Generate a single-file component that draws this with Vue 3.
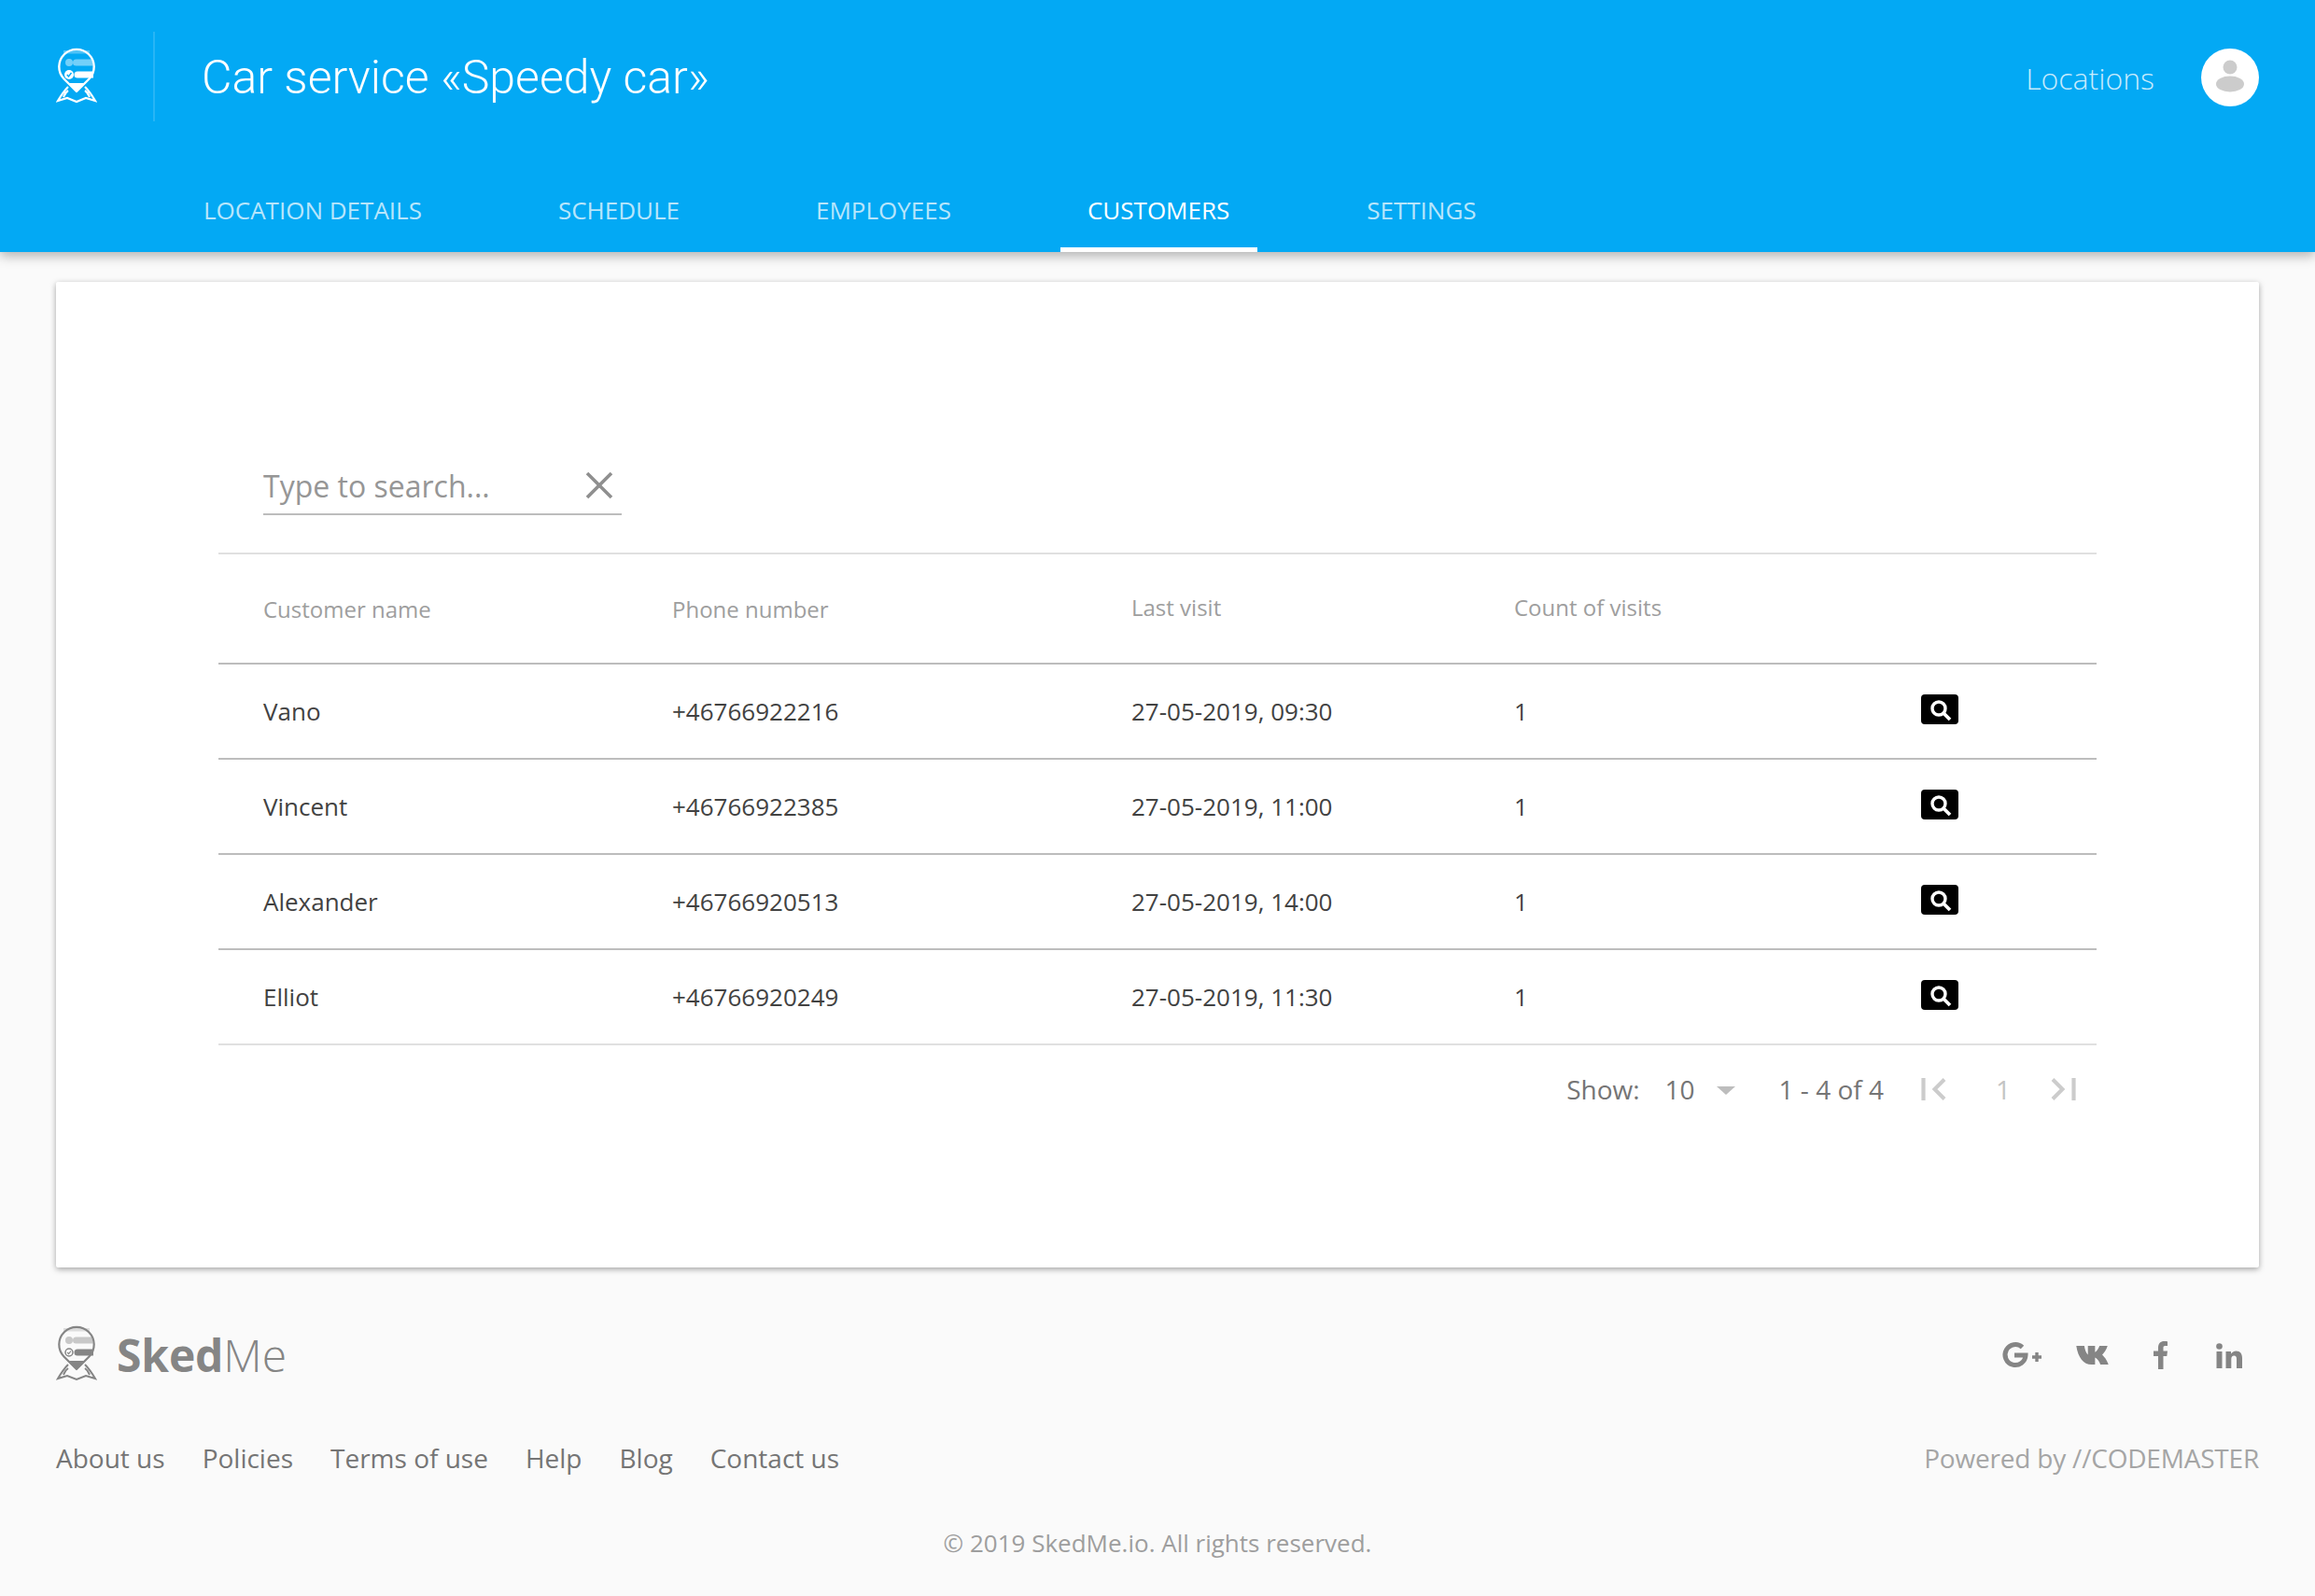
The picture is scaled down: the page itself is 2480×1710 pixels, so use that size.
<script setup>
const tabs = ['LOCATION DETAILS', 'SCHEDULE', 'EMPLOYEES', 'CUSTOMERS', 'SETTINGS']
const rows = [
  ['Vano', '+46766922216', '27-05-2019, 09:30', '1'],
  ['Vincent', '+46766922385', '27-05-2019, 11:00', '1'],
  ['Alexander', '+46766920513', '27-05-2019, 14:00', '1'],
  ['Elliot', '+46766920249', '27-05-2019, 11:30', '1'],
]
const links = ['About us', 'Policies', 'Terms of use', 'Help', 'Blog', 'Contact us']
</script>

<template>
  <div class="page">
    <header class="header">
      <div class="top">
        <div class="logo-box">
          <svg class="logo" viewBox="0 0 44 60" width="44" height="60">
            <rect x="8" y="3" width="28" height="3.500" fill="#fff" opacity=".3" />
            <circle cx="14" cy="16" r="4" fill="#fff" opacity=".45" />
            <path d="M21.500 12.500 H38 A19 19 0 0 1 39.500 19.500 H21.500 A3.500 3.500 0 0 1 21.500 12.500 Z" fill="#fff" opacity=".45" />
            <circle cx="14" cy="29" r="5" fill="#fff" />
            <path d="M11.800 29 L13.500 31 L16.500 27" fill="none" stroke="#03a9f4" stroke-width="1.400" />
            <path d="M23 25.500 H40 V32.500 H23 A3.500 3.500 0 0 1 23 25.500 Z" fill="#fff" />
            <path d="M22 47 L8.500 33.500 A18.700 18.700 0 1 1 35.500 33.500 Z" fill="none" stroke="#fff" stroke-width="2.400" stroke-linejoin="round" />
            <path d="M22 47 L14 38 H30 Z" fill="#fff" />
            <path d="M13 42 C9 46 5 52 2 57 L12 54 L22 58 L32 54 L42 57 C39 52 35 46 31 42 M13 46 C10 48 9 51 8 53 M31 46 C34 48 35 51 36 53" fill="none" stroke="#fff" stroke-width="2.200" />
          </svg>
        </div>
        <h1 class="title">Car service «Speedy car»</h1>
        <span class="locations">Locations</span>
        <div class="avatar">
          <svg viewBox="0 0 62 62" width="62" height="62">
            <circle cx="31" cy="20" r="7.500" fill="#ccc" />
            <ellipse cx="31" cy="38" rx="15" ry="8.500" fill="#ccc" />
          </svg>
        </div>
      </div>
      <nav class="tabs">
        <a v-for="t in tabs" :key="t" class="tab" :class="{ active: t === 'CUSTOMERS' }">{{ t }}</a>
      </nav>
    </header>

    <main class="card">
      <div class="search">
        <span class="placeholder">Type to search...</span>
        <svg width="30" height="30" viewBox="0 0 30 30" class="clear">
          <path d="M2 2 L28 28 M28 2 L2 28" stroke="#8f8f8f" stroke-width="3.600" fill="none" />
        </svg>
      </div>
      <div class="table">
        <div class="row head">
          <span class="low">Customer name</span>
          <span class="low">Phone number</span>
          <span>Last visit</span>
          <span>Count of visits</span>
          <span></span>
        </div>
        <div v-for="r in rows" :key="r[0]" class="row body">
          <span v-for="c in r" :key="c">{{ c }}</span>
          <span class="view">
            <svg width="40" height="32" viewBox="0 0 40 32">
              <rect width="40" height="32" rx="4" fill="#000" />
              <circle cx="19" cy="15" r="7" fill="none" stroke="#fff" stroke-width="3.400" />
              <path d="M24 20 L31 27" stroke="#fff" stroke-width="3.800" />
            </svg>
          </span>
        </div>
      </div>
      <div class="pager">
        <span class="show">Show:</span>
        <span class="size">10</span>
        <span class="caret"></span>
        <span class="range">1 - 4 of 4</span>
        <svg class="nav-first" width="28" height="26" viewBox="0 0 28 26">
          <path d="M2.500 1 V25" stroke="#ccc" stroke-width="4.200" />
          <path d="M25 2.500 L14.500 13 L25 23.500" stroke="#ccc" stroke-width="4" fill="none" />
        </svg>
        <span class="page-no">1</span>
        <svg class="nav-last" width="28" height="26" viewBox="0 0 28 26">
          <path d="M25.500 1 V25" stroke="#ccc" stroke-width="4.200" />
          <path d="M3 2.500 L13.500 13 L3 23.500" stroke="#ccc" stroke-width="4" fill="none" />
        </svg>
      </div>
    </main>

    <footer class="footer">
      <div class="foot-top">
        <div class="brand">
          <svg class="brand-logo" viewBox="0 0 44 60" width="44" height="60">
            <rect x="8" y="3" width="28" height="3.500" fill="#ddd" />
            <circle cx="14" cy="16" r="4" fill="#c8c8c8" />
            <path d="M21.500 12.500 H38 A19 19 0 0 1 39.500 19.500 H21.500 A3.500 3.500 0 0 1 21.500 12.500 Z" fill="#c8c8c8" />
            <circle cx="14" cy="29" r="4" fill="none" stroke="#858585" stroke-width="1.500" />
            <path d="M12.200 29 L13.600 30.600 L16 27.500" fill="none" stroke="#858585" stroke-width="1.200" />
            <path d="M23 25.500 H40 V32.500 H23 A3.500 3.500 0 0 1 23 25.500 Z" fill="#858585" />
            <path d="M22 47 L8.500 33.500 A18.700 18.700 0 1 1 35.500 33.500 Z" fill="none" stroke="#858585" stroke-width="2.200" stroke-linejoin="round" />
            <path d="M22 47 L14 38 H30 Z" fill="#858585" />
            <path d="M13 42 C9 46 5 52 2 57 L12 54 L22 58 L32 54 L42 57 C39 52 35 46 31 42 M13 46 C10 48 9 51 8 53 M31 46 C34 48 35 51 36 53" fill="none" stroke="#858585" stroke-width="2" />
          </svg>
          <span class="brand-name"><b>Sked</b>Me</span>
        </div>
        <div class="social">
          <svg width="44" height="30" viewBox="0 0 44 30" class="s-g">
            <path d="M22.500 6.500 A11 11 0 1 0 26 15 H14" fill="none" stroke="#858585" stroke-width="5" />
            <path d="M38 12 V22 M33 17 H43" stroke="#858585" stroke-width="3.400" />
          </svg>
          <svg width="35" height="22" viewBox="0 0 36 23" class="s-vk">
            <path d="M0 1 H9 C9.500 5 11 9 13 11 V1 H21 V8 C23 7 25 4 26 1 H35 C34 5 31 9 29 11 C31 13 34 16 36 22 H27 C26 18 23 15 21 14 V22 H17 C8 22 2 14 0 1 Z" fill="#858585" />
          </svg>
          <svg width="16" height="30" viewBox="0 0 16 30" class="s-f">
            <path d="M5 30 V16 H0 V10.500 H5 V7 C5 2.500 7.500 0 11.500 0 C13 0 14.500 .2 15 .3 V5 H12.500 C10.800 5 10.500 5.800 10.500 7.300 V10.500 H15 L14.300 16 H10.500 V30 Z" fill="#858585" />
          </svg>
          <svg width="28" height="27" viewBox="0 0 28 27" class="s-in">
            <circle cx="3.500" cy="3.500" r="3.300" fill="#858585" />
            <rect x=".5" y="9" width="6" height="18" fill="#858585" />
            <path d="M10.500 9 H16 V11.500 C17 10 19 8.500 21.500 8.500 C26 8.500 28 11.500 28 16 V27 H22 V17 C22 15 21.300 13.500 19.300 13.500 C17.300 13.500 16.300 15 16.300 17 V27 H10.500 Z" fill="#858585" />
          </svg>
        </div>
      </div>
      <div class="foot-links">
        <a v-for="l in links" :key="l">{{ l }}</a>
        <span class="powered">Powered by //CODEMASTER</span>
      </div>
      <div class="copy">© 2019 SkedMe.io. All rights reserved.</div>
    </footer>
  </div>
</template>

<style>
html, body { margin: 0; background: #fafafa; }
</style>

<style scoped>
.page {
  width: 2480px;
  height: 1710px;
  background: #fafafa;
  font-family: "Open Sans", sans-serif;
  overflow: hidden;
}
.header {
  height: 270px;
  background: #03a9f4;
  box-shadow: 0 4px 12px rgba(0, 0, 0, .3);
}
.top {
  height: 165px;
  display: flex;
  align-items: center;
  padding: 0 60px;
}
.logo-box {
  width: 104px;
  height: 96px;
  margin-top: -1px;
  border-right: 2px solid rgba(255, 255, 255, .15);
  display: flex;
  align-items: center;
  flex: none;
}
.logo { display: block; margin-top: -2px; }
.title {
  margin: 0 0 0 50px;
  font: 300 50px "Roboto", sans-serif;
  color: #fff;
  flex: 1;
}
.locations {
  font-size: 32px;
  font-weight: 300;
  color: rgba(255, 255, 255, .78);
  margin: 2px 50px 0 0;
}
.avatar {
  width: 62px;
  height: 62px;
  border-radius: 50%;
  background: #fff;
}
.avatar svg { display: block; }
.tabs {
  height: 105px;
  display: flex;
  padding-left: 189px;
}
.tab {
  box-sizing: border-box;
  height: 105px;
  padding: 42px 29px 0;
  margin-right: 88px;
  font-size: 26px;
  line-height: 36px;
  color: rgba(255, 255, 255, .72);
  border-bottom: 5px solid transparent;
}
.tab.active {
  color: #fff;
  border-bottom-color: #fff;
  padding-right: 30px;
}
.card {
  box-sizing: border-box;
  width: 2360px;
  height: 1056px;
  margin: 32px 60px 0;
  padding: 192px 174px 0;
  background: #fff;
  border-radius: 2px;
  box-shadow: 0 2px 6px rgba(0, 0, 0, .35);
}
.search {
  box-sizing: border-box;
  width: 384px;
  height: 58px;
  margin-left: 48px;
  border-bottom: 2px solid #bdbdbd;
  display: flex;
  align-items: center;
  justify-content: space-between;
  padding-right: 9px;
}
.placeholder {
  font-size: 32px;
  color: #969696;
  line-height: 40px;
  margin-top: -2px;
}
.clear { margin-top: -4px; }
.table { margin-top: 40px; }
.row {
  display: grid;
  grid-template-columns: 486px 492px 410px 436px 1fr;
  align-items: center;
  box-sizing: border-box;
}
.row > span:first-child { padding-left: 48px; }
.head {
  height: 120px;
  padding-bottom: 3px;
  border-top: 2px solid #e0e0e0;
  border-bottom: 2px solid #bdbdbd;
  font-size: 24px;
  color: #9e9e9e;
}
.low { position: relative; top: 2px; }
.body {
  height: 102px;
  border-bottom: 2px solid #bdbdbd;
  font-size: 26px;
  color: #424242;
}
.body:last-child { border-bottom-color: #e0e0e0; }
.view { display: flex; }
.view svg { margin-top: -4px; }
.pager {
  display: flex;
  justify-content: flex-end;
  align-items: center;
  height: 94px;
  padding-right: 22px;
  font-size: 28px;
  color: #757575;
}
.show { margin-right: 27px; }
.size { margin-right: 23px; }
.caret {
  width: 0;
  height: 0;
  border-left: 10.5px solid transparent;
  border-right: 10.5px solid transparent;
  border-top: 9px solid #bdbdbd;
  margin: 3px 47px 0 0;
}
.range { margin-right: 40px; }
.page-no { color: #c4c4c4; margin: 0 42px 0 52px; }
.footer { padding: 0 60px; }
.foot-top {
  display: flex;
  justify-content: space-between;
  align-items: center;
  height: 62px;
  margin-top: 63px;
}
.brand { display: flex; align-items: center; gap: 21px; }
.brand-logo { margin-top: -4px; }
.brand-name {
  font-size: 48px;
  color: #858585;
  font-weight: 300;
  line-height: 1;
  letter-spacing: -.15px;
}
.brand-name b { font-weight: 700; }
.social { display: flex; align-items: center; padding-right: 18px; }
.s-g { margin-right: 36px; margin-left: -2px; }
.s-vk { margin-right: 48px; }
.s-f { margin-right: 51px; }
.foot-links {
  display: flex;
  gap: 40px;
  margin-top: 60px;
  font-size: 28px;
  color: #757575;
  line-height: 38px;
}
.powered { margin-left: auto; color: #a5a5a5; letter-spacing: -.2px; }
.copy {
  margin-top: 54px;
  text-align: center;
  font-size: 26px;
  color: #9e9e9e;
}
</style>
